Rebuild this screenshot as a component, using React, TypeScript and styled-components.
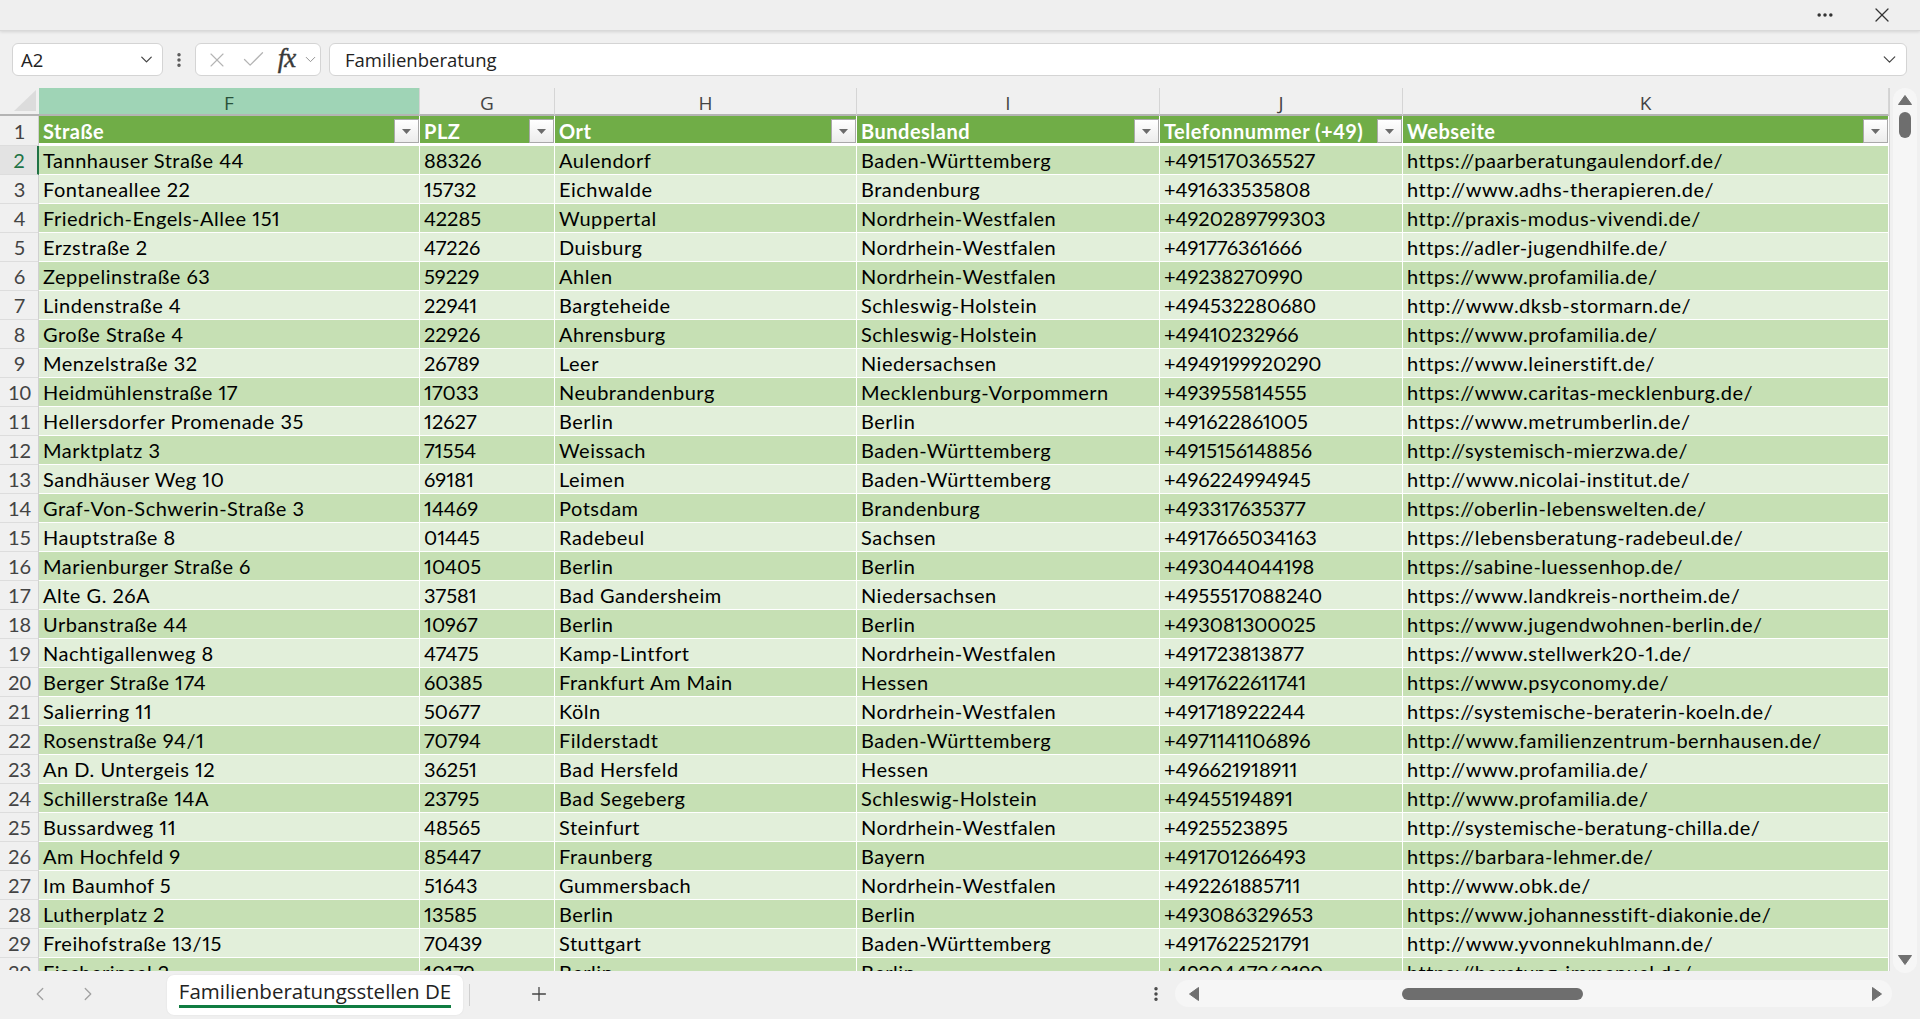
import styled, { createGlobalStyle } from 'styled-components'
import { ChevronDown, ChevronLeft, ChevronRight, Check, MoreHorizontal, MoreVertical, Plus, X } from 'lucide-react'

const GlobalStyle = createGlobalStyle`
  html, body {
    margin: 0;
    padding: 0;
    background: #f0f0f0;
    overflow: hidden;
  }
  * {
    box-sizing: border-box;
  }
`

const columns = [
  { letter: 'F', width: 381, title: 'Straße' },
  { letter: 'G', width: 135, title: 'PLZ' },
  { letter: 'H', width: 302, title: 'Ort' },
  { letter: 'I', width: 303, title: 'Bundesland' },
  { letter: 'J', width: 243, title: 'Telefonnummer (+49)' },
  { letter: 'K', width: 486, title: 'Webseite' }
]

const rows: string[][] = [
  ['Tannhauser Straße 44', '88326', 'Aulendorf', 'Baden-Württemberg', '+4915170365527', 'https://paarberatungaulendorf.de/'],
  ['Fontaneallee 22', '15732', 'Eichwalde', 'Brandenburg', '+491633535808', 'http://www.adhs-therapieren.de/'],
  ['Friedrich-Engels-Allee 151', '42285', 'Wuppertal', 'Nordrhein-Westfalen', '+4920289799303', 'http://praxis-modus-vivendi.de/'],
  ['Erzstraße 2', '47226', 'Duisburg', 'Nordrhein-Westfalen', '+491776361666', 'https://adler-jugendhilfe.de/'],
  ['Zeppelinstraße 63', '59229', 'Ahlen', 'Nordrhein-Westfalen', '+49238270990', 'https://www.profamilia.de/'],
  ['Lindenstraße 4', '22941', 'Bargteheide', 'Schleswig-Holstein', '+494532280680', 'http://www.dksb-stormarn.de/'],
  ['Große Straße 4', '22926', 'Ahrensburg', 'Schleswig-Holstein', '+49410232966', 'https://www.profamilia.de/'],
  ['Menzelstraße 32', '26789', 'Leer', 'Niedersachsen', '+4949199920290', 'https://www.leinerstift.de/'],
  ['Heidmühlenstraße 17', '17033', 'Neubrandenburg', 'Mecklenburg-Vorpommern', '+493955814555', 'https://www.caritas-mecklenburg.de/'],
  ['Hellersdorfer Promenade 35', '12627', 'Berlin', 'Berlin', '+491622861005', 'https://www.metrumberlin.de/'],
  ['Marktplatz 3', '71554', 'Weissach', 'Baden-Württemberg', '+4915156148856', 'http://systemisch-mierzwa.de/'],
  ['Sandhäuser Weg 10', '69181', 'Leimen', 'Baden-Württemberg', '+496224994945', 'http://www.nicolai-institut.de/'],
  ['Graf-Von-Schwerin-Straße 3', '14469', 'Potsdam', 'Brandenburg', '+493317635377', 'https://oberlin-lebenswelten.de/'],
  ['Hauptstraße 8', '01445', 'Radebeul', 'Sachsen', '+4917665034163', 'https://lebensberatung-radebeul.de/'],
  ['Marienburger Straße 6', '10405', 'Berlin', 'Berlin', '+493044044198', 'https://sabine-luessenhop.de/'],
  ['Alte G. 26A', '37581', 'Bad Gandersheim', 'Niedersachsen', '+4955517088240', 'https://www.landkreis-northeim.de/'],
  ['Urbanstraße 44', '10967', 'Berlin', 'Berlin', '+493081300025', 'https://www.jugendwohnen-berlin.de/'],
  ['Nachtigallenweg 8', '47475', 'Kamp-Lintfort', 'Nordrhein-Westfalen', '+491723813877', 'https://www.stellwerk20-1.de/'],
  ['Berger Straße 174', '60385', 'Frankfurt Am Main', 'Hessen', '+4917622611741', 'https://www.psyconomy.de/'],
  ['Salierring 11', '50677', 'Köln', 'Nordrhein-Westfalen', '+491718922244', 'https://systemische-beraterin-koeln.de/'],
  ['Rosenstraße 94/1', '70794', 'Filderstadt', 'Baden-Württemberg', '+4971141106896', 'http://www.familienzentrum-bernhausen.de/'],
  ['An D. Untergeis 12', '36251', 'Bad Hersfeld', 'Hessen', '+496621918911', 'http://www.profamilia.de/'],
  ['Schillerstraße 14A', '23795', 'Bad Segeberg', 'Schleswig-Holstein', '+49455194891', 'http://www.profamilia.de/'],
  ['Bussardweg 11', '48565', 'Steinfurt', 'Nordrhein-Westfalen', '+4925523895', 'http://systemische-beratung-chilla.de/'],
  ['Am Hochfeld 9', '85447', 'Fraunberg', 'Bayern', '+491701266493', 'https://barbara-lehmer.de/'],
  ['Im Baumhof 5', '51643', 'Gummersbach', 'Nordrhein-Westfalen', '+492261885711', 'http://www.obk.de/'],
  ['Lutherplatz 2', '13585', 'Berlin', 'Berlin', '+493086329653', 'https://www.johannesstift-diakonie.de/'],
  ['Freihofstraße 13/15', '70439', 'Stuttgart', 'Baden-Württemberg', '+4917622521791', 'http://www.yvonnekuhlmann.de/'],
  ['Fischerinsel 2', '10179', 'Berlin', 'Berlin', '+4930447262190', 'https://beratung-immanuel.de/']
]

// columns G and J hold numbers and get no extra letter spacing
const numeric = [false, true, false, false, true, false]

export default function App () {
  return (
    <Window>
      <GlobalStyle />

      <TitleBar>
        <MoreHorizontal size={20} strokeWidth={2.2} />
        <X size={24} strokeWidth={1.3} />
      </TitleBar>

      <FormulaRow>
        <NameBox>
          <span>A2</span>
          <ChevronDown size={19} strokeWidth={1.6} />
        </NameBox>
        <Grip>
          <MoreVertical size={18} strokeWidth={2.6} />
        </Grip>
        <FxBox>
          <FxSlot $w={34}>
            <X size={24} strokeWidth={1.1} color='#b4b4b4' />
          </FxSlot>
          <FxSlot $w={40}>
            <Check size={27} strokeWidth={1.1} color='#b4b4b4' />
          </FxSlot>
          <FxSlot $w={28}>
            <Fx>fx</Fx>
          </FxSlot>
          <FxSlot $w={20}>
            <ChevronDown size={17} strokeWidth={1.3} color='#8a8a8a' />
          </FxSlot>
        </FxBox>
        <FormulaInput>
          <span>Familienberatung</span>
          <ChevronDown size={21} strokeWidth={1.4} color='#444' />
        </FormulaInput>
      </FormulaRow>

      <SheetArea>
        <Grid>
          <Row>
            <Corner>
              <svg width='22' height='21' viewBox='0 0 22 21'>
                <path d='M22 0 L22 21 L0 21 Z' fill='#dcdcdc' />
              </svg>
            </Corner>
            {columns.map(c => (
              <ColHead key={c.letter} $w={c.width} $selected={c.letter === 'F'}>{c.letter}</ColHead>
            ))}
          </Row>

          <Row>
            <RowNum $h={30}>1</RowNum>
            {columns.map(c => (
              <HeadCell key={c.letter} $w={c.width}>
                <span>{c.title}</span>
                <FilterButton>
                  <svg width='9' height='5' viewBox='0 0 9 5'>
                    <path d='M0 0 H9 L4.5 5 Z' fill='#6b6b6b' />
                  </svg>
                </FilterButton>
              </HeadCell>
            ))}
          </Row>

          {rows.map((r, i) => (
            <Row key={i}>
              <RowNum $h={29} $active={i === 0}>{i + 2}</RowNum>
              {r.map((v, j) => (
                <Cell key={j} $w={columns[j].width} $dark={i % 2 === 0} $num={numeric[j]}>{v}</Cell>
              ))}
            </Row>
          ))}
        </Grid>

        <VScroll>
          <svg width='14' height='10' viewBox='0 0 14 10'>
            <path d='M7 0.5 L13.5 9.5 H0.5 Z' fill='#707070' stroke='#707070' strokeLinejoin='round' />
          </svg>
          <VThumb />
          <Spacer />
          <svg width='14' height='10' viewBox='0 0 14 10'>
            <path d='M0.5 0.5 H13.5 L7 9.5 Z' fill='#707070' stroke='#707070' strokeLinejoin='round' />
          </svg>
        </VScroll>
      </SheetArea>

      <BottomBar>
        <NavArrows>
          <ChevronLeft size={22} strokeWidth={1.4} />
          <ChevronRight size={22} strokeWidth={1.4} />
        </NavArrows>
        <SheetTab>
          <TabLabel>Familienberatungsstellen DE</TabLabel>
        </SheetTab>
        <TabDivider />
        <AddSheet>
          <Plus size={22} strokeWidth={1.4} />
        </AddSheet>
        <Spacer />
        <SplitGrip>
          <MoreVertical size={18} strokeWidth={2.6} />
        </SplitGrip>
        <HScroll>
          <svg width='10' height='14' viewBox='0 0 10 14'>
            <path d='M9.5 0.5 V13.5 L0.5 7 Z' fill='#707070' stroke='#707070' strokeLinejoin='round' />
          </svg>
          <HThumb />
          <Spacer />
          <svg width='10' height='14' viewBox='0 0 10 14'>
            <path d='M0.5 0.5 V13.5 L9.5 7 Z' fill='#707070' stroke='#707070' strokeLinejoin='round' />
          </svg>
        </HScroll>
      </BottomBar>
    </Window>
  )
}

const Window = styled.div`
  width: 1920px;
  height: 1019px;
  display: flex;
  flex-direction: column;
  background: #f0f0f0;
  font-family: 'Open Sans', 'Noto Sans', sans-serif;
  color: #222;
  overflow: hidden;
`

const TitleBar = styled.div`
  height: 31px;
  flex-shrink: 0;
  display: flex;
  align-items: center;
  justify-content: flex-end;
  gap: 35px;
  padding-right: 26px;
  color: #333;
  background: #efefef;
  border-bottom: 1px solid #d9d9d9;
  box-shadow: 0 1px 3px rgba(0, 0, 0, 0.12);
  position: relative;
  z-index: 1;
`

const FormulaRow = styled.div`
  height: 57px;
  flex-shrink: 0;
  display: flex;
  align-items: flex-start;
  padding: 12px 13px 0 12px;
`

const NameBox = styled.div`
  width: 151px;
  height: 33px;
  display: flex;
  align-items: center;
  justify-content: space-between;
  padding: 0 6px 0 8px;
  background: #fff;
  border: 1px solid #d4d4d4;
  border-radius: 6px;
  font-size: 18.5px;
  color: #222;
  svg {
    color: #444;
  }
`

const Grip = styled.div`
  width: 32px;
  height: 33px;
  display: flex;
  align-items: center;
  justify-content: center;
  color: #555;
`

const FxBox = styled.div`
  width: 126px;
  height: 33px;
  display: flex;
  align-items: center;
  padding-left: 4px;
  background: #fff;
  border: 1px solid #d4d4d4;
  border-radius: 6px;
`

const FxSlot = styled.div<{ $w: number }>`
  width: ${p => p.$w}px;
  display: flex;
  align-items: center;
  justify-content: center;
`

const Fx = styled.span`
  font-family: 'Liberation Serif', 'DejaVu Serif', serif;
  font-style: italic;
  font-size: 27px;
  color: #3a3a3a;
  line-height: 1;
  margin-top: -3px;
  letter-spacing: -1px;
  -webkit-text-stroke: 0.4px #3a3a3a;
`

const FormulaInput = styled.div`
  flex: 1;
  height: 33px;
  margin-left: 8px;
  display: flex;
  align-items: center;
  justify-content: space-between;
  padding: 0 6px 0 15px;
  background: #fff;
  border: 1px solid #d4d4d4;
  border-radius: 6px;
  font-size: 18.5px;
  color: #222;
`

const SheetArea = styled.div`
  height: 883px;
  flex-shrink: 0;
  display: flex;
  align-items: flex-start;
`

const Grid = styled.div`
  width: 1890px;
  height: 883px;
  overflow: hidden;
  display: flex;
  flex-direction: column;
  border-right: 1px solid #d2d2d2;
  font-family: Lato, 'Noto Sans', sans-serif;
`

const Row = styled.div`
  display: flex;
  flex-shrink: 0;
`

const Corner = styled.div`
  width: 39px;
  height: 28px;
  display: flex;
  align-items: flex-end;
  justify-content: flex-end;
  padding: 0 3px 3px 0;
  background: #f0f0f0;
  border-bottom: 2px solid #b4b4b4;
`

const ColHead = styled.div<{ $w: number; $selected?: boolean }>`
  width: ${p => p.$w}px;
  height: 28px;
  display: flex;
  align-items: center;
  justify-content: center;
  padding-top: 3px;
  font-family: 'Open Sans', 'Noto Sans', sans-serif;
  font-size: 19px;
  color: ${p => (p.$selected ? '#28513a' : '#444')};
  background: ${p => (p.$selected ? '#9fd4b6' : '#f0f0f0')};
  border-right: 1px solid #d5d5d5;
  border-bottom: 2px solid #b4b4b4;
`

const RowNum = styled.div<{ $h: number; $active?: boolean }>`
  width: 39px;
  height: ${p => p.$h}px;
  display: flex;
  align-items: center;
  justify-content: center;
  padding-left: 1px;
  font-size: 20px;
  color: ${p => (p.$active ? '#217346' : '#444')};
  background: ${p => (p.$active ? '#e3e3e3' : '#f0f0f0')};
  border-bottom: 1px solid #dddddd;
  border-right: ${p => (p.$active ? '2px solid #217346' : '1px solid #d0d0d0')};
`

const HeadCell = styled.div<{ $w: number }>`
  width: ${p => p.$w}px;
  height: 30px;
  display: flex;
  align-items: flex-start;
  justify-content: space-between;
  padding-left: 4px;
  background: #70ad47;
  border-right: 1px solid #fff;
  border-bottom: 3px solid #fff;
  color: #fff;
  font-weight: 700;
  font-size: 20px;
  letter-spacing: 0.5px;
  line-height: 30px;
  white-space: nowrap;
  overflow: hidden;
`

const FilterButton = styled.div`
  width: 25px;
  height: 24px;
  margin-top: 3px;
  flex-shrink: 0;
  display: flex;
  align-items: center;
  justify-content: center;
  padding-top: 1px;
  background: linear-gradient(#ffffff, #ececec);
  border: 1px solid #a9a9a9;
`

const Cell = styled.div<{ $w: number; $dark: boolean; $num?: boolean }>`
  width: ${p => p.$w}px;
  height: 29px;
  padding-left: 4px;
  background: ${p => (p.$dark ? '#c6e0b4' : '#e2efda')};
  border-right: 1px solid #fff;
  border-bottom: 1px solid #fff;
  color: #000;
  font-size: 20px;
  letter-spacing: ${p => (p.$num ? '0' : '0.5px')};
  font-variant-numeric: proportional-nums;
  line-height: 28px;
  white-space: nowrap;
  overflow: hidden;
`

const VScroll = styled.div`
  width: 24px;
  height: 885px;
  margin-left: 3px;
  display: flex;
  flex-direction: column;
  align-items: center;
  padding: 7px 0 8px;
  gap: 6px;
  background: #f6f6f6;
  border-radius: 12px;
`

const VThumb = styled.div`
  width: 12px;
  height: 26px;
  margin-top: 1px;
  background: #6e6e6e;
  border-radius: 6px;
`

const Spacer = styled.div`
  flex: 1;
`

const BottomBar = styled.div`
  flex: 1;
  display: flex;
  align-items: flex-start;
  position: relative;
  z-index: 1;
`

const NavArrows = styled.div`
  width: 167px;
  display: flex;
  align-items: center;
  gap: 26px;
  padding: 12px 0 0 29px;
  color: #a0a0a0;
`

const SheetTab = styled.div`
  width: 296px;
  height: 40px;
  margin-top: 4px;
  display: flex;
  justify-content: center;
  background: #fff;
  border-radius: 7px;
  box-shadow: 0 0 2px rgba(0, 0, 0, 0.08);
`

const TabLabel = styled.span`
  margin-top: 3px;
  height: 30px;
  font-size: 20.5px;
  line-height: 27px;
  color: #222;
  border-bottom: 3px solid #107c41;
`

const TabDivider = styled.div`
  width: 1px;
  height: 22px;
  margin: 13px 0 0 6px;
  background: #cfcfcf;
`

const AddSheet = styled.div`
  margin: 12px 0 0 58px;
  color: #444;
`

const SplitGrip = styled.div`
  margin: 14px 10px 0 0;
  color: #444;
`

const HScroll = styled.div`
  width: 717px;
  height: 27px;
  margin: 9px 28px 0 0;
  display: flex;
  align-items: center;
  padding: 0 10px 0 14px;
  background: #f6f6f6;
  border-radius: 14px;
`

const HThumb = styled.div`
  width: 181px;
  height: 12px;
  margin-left: 203px;
  background: #6e6e6e;
  border-radius: 6px;
`
